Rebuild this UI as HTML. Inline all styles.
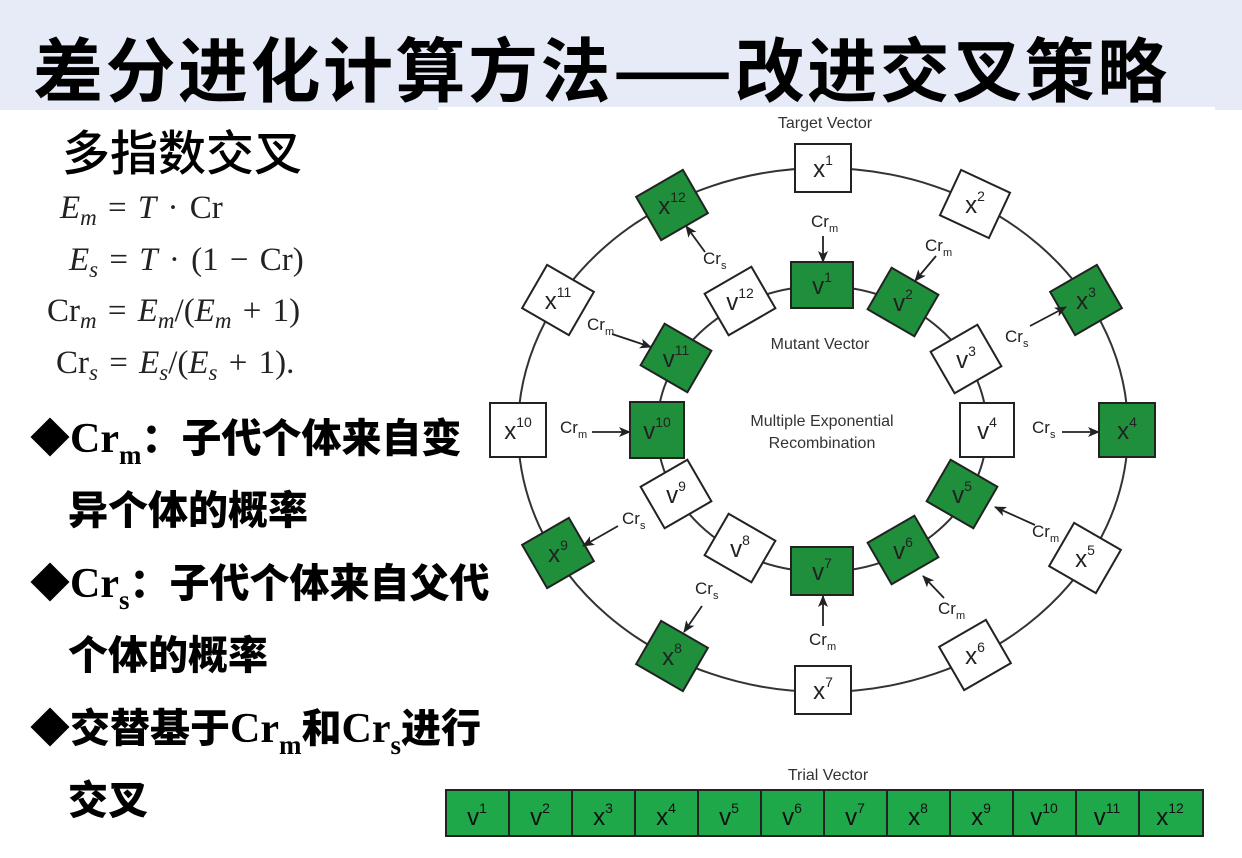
<!DOCTYPE html>
<html><head><meta charset="utf-8"><style>
html,body{margin:0;padding:0;background:#fff;width:1242px;height:858px;overflow:hidden;position:relative;font-family:"Liberation Sans","Noto Sans CJK SC",sans-serif}
.bar{position:absolute;left:0;top:0;width:1242px;height:110px;background:#e6ebf7}
.wh{position:absolute;left:438px;top:107px;width:777px;height:10px;background:#fff}
.title{position:absolute;left:33px;top:22px;font-size:70px;font-weight:bold;letter-spacing:2.5px;white-space:nowrap;line-height:90px;color:#000;font-family:"Noto Sans CJK SC",sans-serif}
.sub{position:absolute;left:62px;top:118px;font-size:48px;line-height:62px;font-family:"Noto Sans CJK SC",sans-serif;font-weight:500}
.eq{position:absolute;font-family:"Liberation Serif",serif;font-size:33px;color:#222;white-space:nowrap;word-spacing:3px}
.eq i{font-style:italic}
.eq sub{font-size:23px;font-style:italic;vertical-align:-7px;line-height:0}
.b{position:absolute;left:30px;font-size:40px;font-weight:900;white-space:nowrap;line-height:50px;font-family:"Noto Sans CJK SC",sans-serif}
.b .s{font-family:"Liberation Serif",serif;font-weight:bold;font-size:42px}
.b .s sub{font-size:27px;vertical-align:-12px;line-height:0}
</style></head><body>
<div class="bar"></div><div class="wh"></div>
<div class="title">差分进化计算方法——改进交叉策略</div>
<div class="sub">多指数交叉</div>
<div class="eq" style="left:60px;top:190px"><i>E</i><sub>m</sub> = <i>T</i> · Cr</div>
<div class="eq" style="left:69px;top:242px"><i>E</i><sub>s</sub> = <i>T</i> · (1 − Cr)</div>
<div class="eq" style="left:47px;top:293px">Cr<sub>m</sub> = <i>E</i><sub>m</sub>/(<i>E</i><sub>m</sub> + 1)</div>
<div class="eq" style="left:56px;top:345px">Cr<sub>s</sub> = <i>E</i><sub>s</sub>/(<i>E</i><sub>s</sub> + 1).</div>
<div class="b" style="top:410px">◆<span class="s">Cr<sub>m</sub></span>：子代个体来自变</div>
<div class="b" style="top:482px;left:68px">异个体的概率</div>
<div class="b" style="top:555px">◆<span class="s">Cr<sub>s</sub></span>：子代个体来自父代</div>
<div class="b" style="top:627px;left:68px">个体的概率</div>
<div class="b" style="top:700px">◆交替基于<span class="s">Cr<sub>m</sub></span>和<span class="s">Cr<sub>s</sub></span>进行</div>
<div class="b" style="top:772px;left:68px">交叉</div>

<svg style="position:absolute;left:0;top:0" width="1242" height="858" viewBox="0 0 1242 858" font-family="Liberation Sans, sans-serif">
<defs><marker id="ar" markerWidth="12" markerHeight="10" refX="11" refY="5" orient="auto" markerUnits="userSpaceOnUse"><path d="M0,0 L12,5 L0,10 L3,5 Z" fill="#222"/></marker></defs>
<g fill="none" stroke="#333" stroke-width="2">
<ellipse cx="823" cy="430" rx="305" ry="262"/>
<ellipse cx="822" cy="429" rx="165" ry="143"/>
</g>
<g fill="#333" font-size="16" text-anchor="middle">
<text x="825" y="128">Target Vector</text>
<text x="820" y="349">Mutant Vector</text>
<text x="822" y="426">Multiple Exponential</text>
<text x="822" y="448">Recombination</text>
<text x="828" y="780">Trial Vector</text>
</g>
<g stroke="#222" stroke-width="2">
<rect x="795" y="144" width="56" height="48" fill="#fff"/>
<rect x="-27" y="-25" width="54" height="50" fill="#fff" transform="translate(975,204) rotate(25)"/>
<rect x="-27" y="-25" width="54" height="50" fill="#1f8f3c" transform="translate(1086,300) rotate(-30)"/>
<rect x="1099" y="403" width="56" height="54" fill="#1f8f3c"/>
<rect x="-27" y="-25" width="54" height="50" fill="#fff" transform="translate(1085,558) rotate(30)"/>
<rect x="-27" y="-25" width="54" height="50" fill="#fff" transform="translate(975,655) rotate(-30)"/>
<rect x="795" y="666" width="56" height="48" fill="#fff"/>
<rect x="-27" y="-25" width="54" height="50" fill="#1f8f3c" transform="translate(672,656) rotate(30)"/>
<rect x="-27" y="-25" width="54" height="50" fill="#1f8f3c" transform="translate(558,553) rotate(-30)"/>
<rect x="490" y="403" width="56" height="54" fill="#fff"/>
<rect x="-27" y="-25" width="54" height="50" fill="#fff" transform="translate(558,300) rotate(30)"/>
<rect x="-27" y="-25" width="54" height="50" fill="#1f8f3c" transform="translate(672,205) rotate(-30)"/>
<rect x="791" y="262" width="62" height="46" fill="#1f8f3c"/>
<rect x="-27" y="-24" width="54" height="48" fill="#1f8f3c" transform="translate(903,302) rotate(30)"/>
<rect x="-27" y="-24" width="54" height="48" fill="#fff" transform="translate(966,359) rotate(-30)"/>
<rect x="960" y="403" width="54" height="54" fill="#fff"/>
<rect x="-27" y="-24" width="54" height="48" fill="#1f8f3c" transform="translate(962,494) rotate(30)"/>
<rect x="-27" y="-24" width="54" height="48" fill="#1f8f3c" transform="translate(903,550) rotate(-30)"/>
<rect x="791" y="547" width="62" height="48" fill="#1f8f3c"/>
<rect x="-27" y="-24" width="54" height="48" fill="#fff" transform="translate(740,548) rotate(30)"/>
<rect x="-27" y="-24" width="54" height="48" fill="#fff" transform="translate(676,494) rotate(-30)"/>
<rect x="630" y="402" width="54" height="56" fill="#1f8f3c"/>
<rect x="-27" y="-24" width="54" height="48" fill="#1f8f3c" transform="translate(676,358) rotate(30)"/>
<rect x="-27" y="-24" width="54" height="48" fill="#fff" transform="translate(740,301) rotate(-30)"/>
</g>
<g fill="#222" font-size="24" text-anchor="middle">
<text x="823" y="177">x<tspan font-size="14" dy="-12">1</tspan></text>
<text x="975" y="213">x<tspan font-size="14" dy="-12">2</tspan></text>
<text x="1086" y="309">x<tspan font-size="14" dy="-12">3</tspan></text>
<text x="1127" y="439">x<tspan font-size="14" dy="-12">4</tspan></text>
<text x="1085" y="567">x<tspan font-size="14" dy="-12">5</tspan></text>
<text x="975" y="664">x<tspan font-size="14" dy="-12">6</tspan></text>
<text x="823" y="699">x<tspan font-size="14" dy="-12">7</tspan></text>
<text x="672" y="665">x<tspan font-size="14" dy="-12">8</tspan></text>
<text x="558" y="562">x<tspan font-size="14" dy="-12">9</tspan></text>
<text x="518" y="439">x<tspan font-size="14" dy="-12">10</tspan></text>
<text x="558" y="309">x<tspan font-size="14" dy="-12">11</tspan></text>
<text x="672" y="214">x<tspan font-size="14" dy="-12">12</tspan></text>
<text x="822" y="294">v<tspan font-size="14" dy="-12">1</tspan></text>
<text x="903" y="311">v<tspan font-size="14" dy="-12">2</tspan></text>
<text x="966" y="368">v<tspan font-size="14" dy="-12">3</tspan></text>
<text x="987" y="439">v<tspan font-size="14" dy="-12">4</tspan></text>
<text x="962" y="503">v<tspan font-size="14" dy="-12">5</tspan></text>
<text x="903" y="559">v<tspan font-size="14" dy="-12">6</tspan></text>
<text x="822" y="580">v<tspan font-size="14" dy="-12">7</tspan></text>
<text x="740" y="557">v<tspan font-size="14" dy="-12">8</tspan></text>
<text x="676" y="503">v<tspan font-size="14" dy="-12">9</tspan></text>
<text x="657" y="439">v<tspan font-size="14" dy="-12">10</tspan></text>
<text x="676" y="367">v<tspan font-size="14" dy="-12">11</tspan></text>
<text x="740" y="310">v<tspan font-size="14" dy="-12">12</tspan></text>
</g>
<g stroke="#222" stroke-width="1.8" marker-end="url(#ar)">
<line x1="823" y1="236" x2="823" y2="262"/>
<line x1="936" y1="256" x2="915" y2="281"/>
<line x1="705" y1="252" x2="686" y2="226"/>
<line x1="1030" y1="326" x2="1066" y2="307"/>
<line x1="612" y1="334" x2="651" y2="347"/>
<line x1="592" y1="432" x2="630" y2="432"/>
<line x1="1062" y1="432" x2="1099" y2="432"/>
<line x1="618" y1="526" x2="583" y2="546"/>
<line x1="1035" y1="525" x2="995" y2="507"/>
<line x1="702" y1="606" x2="684" y2="632"/>
<line x1="823" y1="626" x2="823" y2="596"/>
<line x1="944" y1="598" x2="923" y2="576"/>
</g>
<g fill="#222" font-size="17">
<text x="811" y="227">Cr<tspan font-size="11" dy="5">m</tspan></text>
<text x="925" y="251">Cr<tspan font-size="11" dy="5">m</tspan></text>
<text x="703" y="264">Cr<tspan font-size="11" dy="5">s</tspan></text>
<text x="1005" y="342">Cr<tspan font-size="11" dy="5">s</tspan></text>
<text x="587" y="330">Cr<tspan font-size="11" dy="5">m</tspan></text>
<text x="560" y="433">Cr<tspan font-size="11" dy="5">m</tspan></text>
<text x="1032" y="433">Cr<tspan font-size="11" dy="5">s</tspan></text>
<text x="622" y="524">Cr<tspan font-size="11" dy="5">s</tspan></text>
<text x="1032" y="537">Cr<tspan font-size="11" dy="5">m</tspan></text>
<text x="695" y="594">Cr<tspan font-size="11" dy="5">s</tspan></text>
<text x="938" y="614">Cr<tspan font-size="11" dy="5">m</tspan></text>
<text x="809" y="645">Cr<tspan font-size="11" dy="5">m</tspan></text>
</g>
<rect x="446" y="790" width="757" height="46" stroke="#222" stroke-width="2" fill="#1fa849"/>
<g stroke="#222" stroke-width="2">
<line x1="509" y1="790" x2="509" y2="836"/><line x1="572" y1="790" x2="572" y2="836"/><line x1="635" y1="790" x2="635" y2="836"/><line x1="698" y1="790" x2="698" y2="836"/><line x1="761" y1="790" x2="761" y2="836"/><line x1="824" y1="790" x2="824" y2="836"/><line x1="887" y1="790" x2="887" y2="836"/><line x1="950" y1="790" x2="950" y2="836"/><line x1="1013" y1="790" x2="1013" y2="836"/><line x1="1076" y1="790" x2="1076" y2="836"/><line x1="1139" y1="790" x2="1139" y2="836"/>
</g>
<g fill="#111" font-size="24" text-anchor="middle">
<text x="477" y="825">v<tspan font-size="14" dy="-12">1</tspan></text>
<text x="540" y="825">v<tspan font-size="14" dy="-12">2</tspan></text>
<text x="603" y="825">x<tspan font-size="14" dy="-12">3</tspan></text>
<text x="666" y="825">x<tspan font-size="14" dy="-12">4</tspan></text>
<text x="729" y="825">v<tspan font-size="14" dy="-12">5</tspan></text>
<text x="792" y="825">v<tspan font-size="14" dy="-12">6</tspan></text>
<text x="855" y="825">v<tspan font-size="14" dy="-12">7</tspan></text>
<text x="918" y="825">x<tspan font-size="14" dy="-12">8</tspan></text>
<text x="981" y="825">x<tspan font-size="14" dy="-12">9</tspan></text>
<text x="1044" y="825">v<tspan font-size="14" dy="-12">10</tspan></text>
<text x="1107" y="825">v<tspan font-size="14" dy="-12">11</tspan></text>
<text x="1170" y="825">x<tspan font-size="14" dy="-12">12</tspan></text>
</g>
</svg>
</body></html>
